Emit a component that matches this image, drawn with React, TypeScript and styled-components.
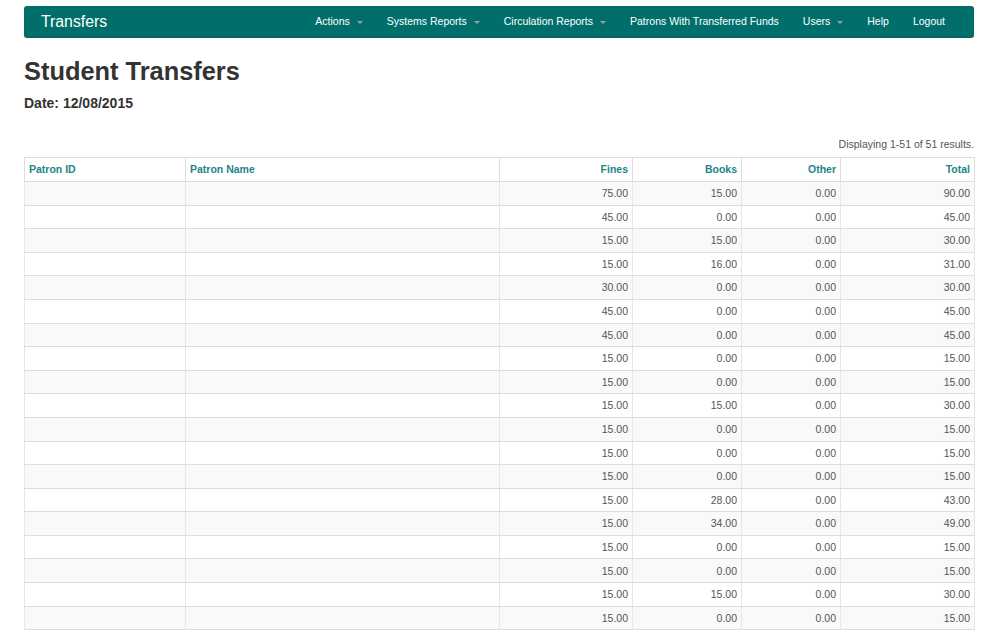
import React from "react";
import styled, { createGlobalStyle } from "styled-components";

const Global = createGlobalStyle`
  html, body { margin: 0; padding: 0; background: #fff; overflow: hidden; }
  body { font-family: "Liberation Sans", Arial, sans-serif; color: #333; }
`;

const Page = styled.div`
  padding: 6px 26px 0 24px;
  width: 950px;
`;

const Navbar = styled.nav`
  display: flex;
  align-items: center;
  height: 31px;
  background: #006f6b;
  border-radius: 3px;
  box-shadow: 0 1px 0 #0b5f5b;
  padding: 0 17px 0 17px;
`;

const Brand = styled.div`
  font-size: 15.8px;
  color: #fff;
  line-height: 31px;
`;

const NavList = styled.ul`
  display: flex;
  margin: 0 0 0 auto;
  padding: 0;
  list-style: none;
`;

const NavItem = styled.li`
  display: flex;
  align-items: center;
  padding: 0 12px;
  font-size: 10.5px;
  color: #fff;
  line-height: 31px;
`;

const Caret = styled.span`
  display: inline-block;
  width: 0;
  height: 0;
  margin-left: 7px;
  margin-top: 1px;
  border-top: 3px solid #a39c9c;
  border-left: 3px solid transparent;
  border-right: 3px solid transparent;
`;

const Title = styled.h1`
  margin: 20.5px 0 0;
  font-size: 25.4px;
  line-height: 27.5px;
  font-weight: bold;
  color: #333;
`;

const DateLine = styled.div`
  margin-top: 7.7px;
  font-size: 14px;
  line-height: 20px;
  font-weight: bold;
  color: #333;
`;

const Summary = styled.div`
  margin-top: 24.7px;
  text-align: right;
  font-size: 10.5px;
  line-height: 15px;
  color: #555;
`;

const Table = styled.table`
  margin-top: 4.6px;
  width: 950px;
  border-collapse: collapse;
  table-layout: fixed;
  border: 1px solid #ddd;
  font-size: 10.5px;
`;

const HeadRow = styled.tr`
  height: 24px;
`;

const Th = styled.th<{ $w: number; $right?: boolean }>`
  box-sizing: border-box;
  width: ${(p) => p.$w}px;
  padding: 0 4px;
  text-align: ${(p) => (p.$right ? "right" : "left")};
  font-weight: bold;
  color: #1f8488;
  border: 1px solid #ddd;
  line-height: 1;
`;

const Row = styled.tr<{ $odd: boolean }>`
  height: 23.6px;
  background: ${(p) => (p.$odd ? "#f9f9f9" : "#fff")};
`;

const Td = styled.td<{ $right?: boolean }>`
  padding: 0 4px;
  text-align: ${(p) => (p.$right ? "right" : "left")};
  color: #555;
  border: 1px solid #ddd;
  border-left-color: #e6e6e6;
  border-right-color: #e6e6e6;
  line-height: 1;
  overflow: hidden;
  white-space: nowrap;
`;

const navItems: { label: string; caret?: boolean }[] = [
  { label: "Actions", caret: true },
  { label: "Systems Reports", caret: true },
  { label: "Circulation Reports", caret: true },
  { label: "Patrons With Transferred Funds" },
  { label: "Users", caret: true },
  { label: "Help" },
  { label: "Logout" },
];

const columns: { label: string; width: number; right?: boolean }[] = [
  { label: "Patron ID", width: 161 },
  { label: "Patron Name", width: 314 },
  { label: "Fines", width: 133, right: true },
  { label: "Books", width: 109, right: true },
  { label: "Other", width: 99, right: true },
  { label: "Total", width: 134, right: true },
];

const rows: [string, string, string, string][] = [
  ["75.00", "15.00", "0.00", "90.00"],
  ["45.00", "0.00", "0.00", "45.00"],
  ["15.00", "15.00", "0.00", "30.00"],
  ["15.00", "16.00", "0.00", "31.00"],
  ["30.00", "0.00", "0.00", "30.00"],
  ["45.00", "0.00", "0.00", "45.00"],
  ["45.00", "0.00", "0.00", "45.00"],
  ["15.00", "0.00", "0.00", "15.00"],
  ["15.00", "0.00", "0.00", "15.00"],
  ["15.00", "15.00", "0.00", "30.00"],
  ["15.00", "0.00", "0.00", "15.00"],
  ["15.00", "0.00", "0.00", "15.00"],
  ["15.00", "0.00", "0.00", "15.00"],
  ["15.00", "28.00", "0.00", "43.00"],
  ["15.00", "34.00", "0.00", "49.00"],
  ["15.00", "0.00", "0.00", "15.00"],
  ["15.00", "0.00", "0.00", "15.00"],
  ["15.00", "15.00", "0.00", "30.00"],
  ["15.00", "0.00", "0.00", "15.00"],
];

export default function App() {
  return (
    <>
      <Global />
      <Page>
        <Navbar>
          <Brand>Transfers</Brand>
          <NavList>
            {navItems.map((n) => (
              <NavItem key={n.label}>
                {n.label}
                {n.caret && <Caret />}
              </NavItem>
            ))}
          </NavList>
        </Navbar>
        <Title>Student Transfers</Title>
        <DateLine>Date: 12/08/2015</DateLine>
        <Summary>Displaying 1-51 of 51 results.</Summary>
        <Table>
          <thead>
            <HeadRow>
              {columns.map((c) => (
                <Th key={c.label} $w={c.width} $right={c.right}>
                  {c.label}
                </Th>
              ))}
            </HeadRow>
          </thead>
          <tbody>
            {rows.map((r, i) => (
              <Row key={i} $odd={i % 2 === 0}>
                <Td />
                <Td />
                {r.map((v, j) => (
                  <Td key={j} $right>
                    {v}
                  </Td>
                ))}
              </Row>
            ))}
          </tbody>
        </Table>
      </Page>
    </>
  );
}
